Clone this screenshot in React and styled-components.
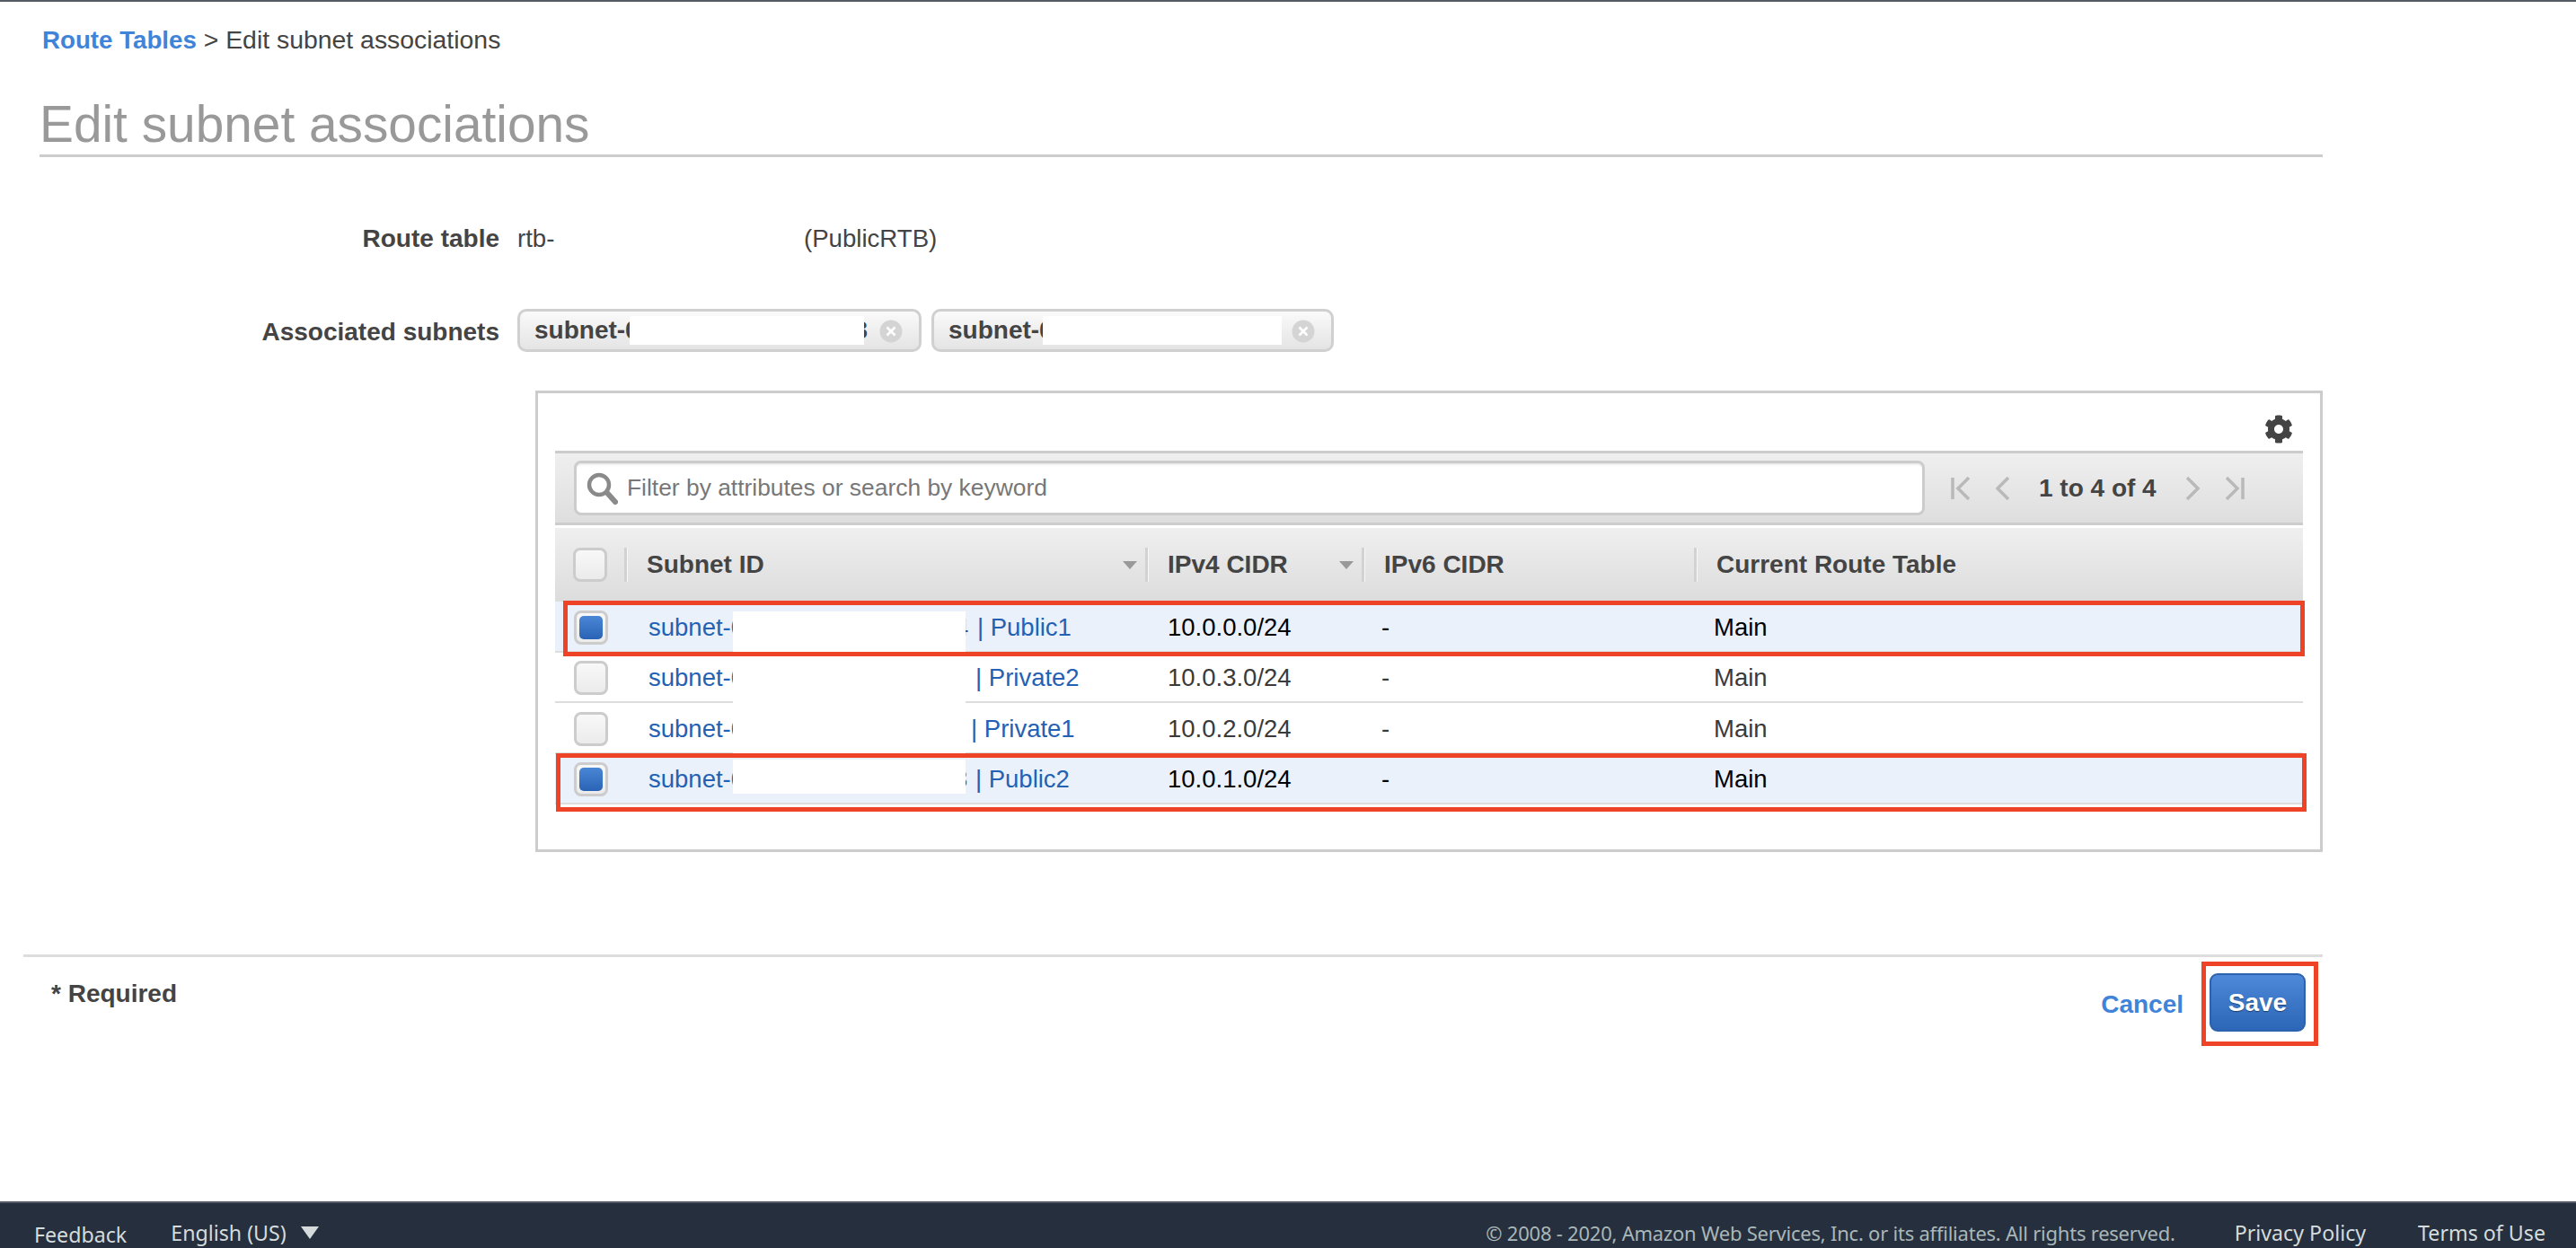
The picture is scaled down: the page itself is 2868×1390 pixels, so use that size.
import React from 'react';
import styled, { createGlobalStyle } from 'styled-components';
import { FaCog } from 'react-icons/fa';

const Global = createGlobalStyle`
  html, body { margin: 0; padding: 0; background: #fff; }
  body { font-family: "Liberation Sans", Arial, sans-serif; color: #444; }
`;

const RED = '#ee4327';

const Page = styled.div`
  width: 2868px;
  height: 1390px;
  display: flex;
  flex-direction: column;
  border-top: 2px solid #545b64;
  box-sizing: border-box;
  overflow: hidden;
`;
const Main = styled.main`
  flex: 1;
  width: 2560px;
  margin-left: 26px;
  display: flex;
  flex-direction: column;
`;
const Breadcrumb = styled.nav`
  margin: 26px 0 0 21px;
  height: 32px;
  line-height: 32px;
  font-size: 28.4px;
  color: #444;
`;
const Crumb = styled.a`
  color: #3f84d8;
  font-weight: 700;
  font-size: 27.7px;
`;
const Title = styled.h1`
  margin: 52px 0 0 18px;
  height: 60px;
  border-bottom: 3px solid #ccc;
  font-size: 56.8px;
  line-height: 54px;
  font-weight: 400;
  color: #999;
`;
const FormRow = styled.div`
  display: grid;
  grid-template-columns: 530px 1fr;
  column-gap: 20px;
  align-items: center;
  height: ${p => p.$h}px;
  margin-top: ${p => p.$mt}px;
  font-size: 28px;
`;
const Label = styled.label`
  text-align: right;
  font-weight: 700;
  color: #444;
  padding-top: ${p => p.$pt || 0}px;
`;
const RouteValue = styled.div`
  display: flex;
  font-size: 27.6px;
`;
const RtbId = styled.span`
  width: 319px;
`;
const Chips = styled.div`
  display: flex;
  gap: 11px;
`;
const Chip = styled.div`
  position: relative;
  box-sizing: border-box;
  width: ${p => p.$w}px;
  height: 48px;
  padding: 0 0 0 16px;
  display: flex;
  align-items: center;
  border: 3px solid #d0d0d0;
  border-radius: 10px;
  background: linear-gradient(#fafafa, #e4e4e4);
  font-weight: 700;
  color: #444;
`;
const ChipMask = styled.span`
  position: absolute;
  left: ${p => p.$left}px;
  width: ${p => p.$w}px;
  top: 5px;
  height: 32px;
  background: #fff;
`;
const ChipTail = styled.span`
  position: absolute;
  right: 57px;
  top: 5px;
  line-height: 32px;
`;
const ChipClose = styled.svg`
  position: absolute;
  right: 18px;
  top: 9px;
  width: 26px;
  height: 26px;
`;
const Panel = styled.section`
  box-sizing: border-box;
  margin: 43px 0 0 570px;
  width: 1990px;
  height: 514px;
  border: 3px solid #ccc;
  padding: 0 19px;
`;
const GearRow = styled.div`
  height: 64px;
  display: flex;
  align-items: flex-end;
  justify-content: flex-end;
  padding: 0 11px 8px 0;
  box-sizing: border-box;
  color: #444;
`;
const FilterBar = styled.div`
  box-sizing: border-box;
  height: 83px;
  border-top: 3px solid #ccc;
  border-bottom: 3px solid #ccc;
  background: linear-gradient(#efefef, #dedede);
  display: flex;
  align-items: center;
  padding-left: 21px;
`;
const SearchBox = styled.div`
  box-sizing: border-box;
  flex: 0 0 1504px;
  height: 61px;
  display: flex;
  align-items: center;
  gap: 10px;
  padding-left: 10px;
  background: #fff;
  border: 3px solid #ccc;
  border-radius: 8px;
  box-shadow: inset 0 3px 3px -2px #ddd;
  font-size: 26.4px;
  color: #777;
  white-space: nowrap;
`;
const Pager = styled.div`
  display: flex;
  align-items: center;
  gap: 29px;
  margin-left: 29px;
`;
const PagerText = styled.span`
  margin: 0 4px;
  font-size: 28px;
  font-weight: 700;
  color: #444;
  white-space: nowrap;
`;
const HeaderRow = styled.div`
  margin-top: 3px;
  height: 82px;
  display: grid;
  grid-template-columns: 77px 580px 241px 370px 1fr;
  align-items: center;
  background: linear-gradient(#efefef, #dcdcdc);
  font-size: 28px;
  font-weight: 700;
  color: #444;
`;
const HeadCell = styled.div`
  position: relative;
  box-sizing: border-box;
  height: 38px;
  display: flex;
  align-items: center;
  padding-left: 22px;
  border-left: 3px solid #d2d2d2;
  box-shadow: inset 1px 0 0 #f8f8f8;
`;
const CheckCell = styled.div`
  display: flex;
  align-items: center;
  padding-left: ${p => p.$pl}px;
`;
const Caret = styled.span`
  position: absolute;
  right: 9px;
  top: 15px;
  border-left: 8px solid transparent;
  border-right: 8px solid transparent;
  border-top: 9px solid #999;
`;
const Check = styled.span`
  box-sizing: border-box;
  width: 38px;
  height: 38px;
  border: 3px solid #ccc;
  border-radius: 8px;
  background: linear-gradient(#f8f8f8, #ebebeb);
  display: flex;
  align-items: center;
  justify-content: center;
  &::after {
    content: '';
    display: ${p => (p.$checked ? 'block' : 'none')};
    width: 26px;
    height: 26px;
    border-radius: 5px;
    background: linear-gradient(#4a86d6, #2a63b5);
  }
`;
const Body = styled.div`
  position: relative;
`;
const Row = styled.div`
  box-sizing: border-box;
  height: 56.5px;
  padding-top: 3px;
  display: grid;
  grid-template-columns: 79px 580px 241px 370px 1fr;
  align-items: center;
  border-bottom: 2px solid #ddd;
  background: ${p => (p.$selected ? '#eaf1fb' : '#fff')};
  color: ${p => (p.$selected ? '#000' : '#3a3a3a')};
  font-size: 27.5px;
`;
const Cell = styled.div`
  padding-left: ${p => p.$pl ?? 23}px;
  white-space: nowrap;
`;
const SubnetLink = styled.a`
  display: flex;
  padding-left: 25px;
  color: #2561b3;
  white-space: nowrap;
`;
const Prefix = styled.span`
  width: 94px;
`;
const Tail = styled.span`
  margin-left: ${p => p.$at}px;
`;
const Remnant = styled.span`
  margin-right: ${p => p.$gap}px;
`;
const Redaction = styled.div`
  position: absolute;
  left: 198px;
  width: 259px;
  top: ${p => p.$top}px;
  height: ${p => p.$h}px;
  background: #fff;
`;
const Highlight = styled.div`
  position: absolute;
  box-sizing: border-box;
  left: ${p => p.$left}px;
  top: ${p => p.$top}px;
  width: ${p => p.$w}px;
  height: ${p => p.$h}px;
  border: 5px solid ${RED};
`;
const Actions = styled.div`
  margin-top: 114px;
  border-top: 3px solid #ddd;
  height: 105px;
  display: flex;
  align-items: flex-start;
  justify-content: space-between;
  padding: 18px 19px 0 31px;
  font-size: 28px;
`;
const Required = styled.strong`
  padding-top: 4px;
  line-height: 38px;
  color: #444;
`;
const ActionGroup = styled.div`
  display: flex;
  align-items: center;
  gap: 29px;
`;
const Cancel = styled.a`
  margin-top: 5px;
  color: #3f84d8;
  font-weight: 700;
`;
const SaveWrap = styled.div`
  position: relative;
`;
const Save = styled.button`
  box-sizing: border-box;
  display: block;
  width: 107px;
  height: 65px;
  border: 2px solid #2c62ae;
  border-radius: 9px;
  background: linear-gradient(#4d89d8, #2c66b7);
  color: #fff;
  font: 700 28px "Liberation Sans", Arial, sans-serif;
  text-shadow: 0 1px 1px rgba(0, 0, 0, 0.45);
  padding: 0;
`;
const Footer = styled.footer`
  box-sizing: border-box;
  height: 52px;
  flex: 0 0 52px;
  border-top: 2px solid #545b64;
  background: #252f3e;
  color: #d5dbdb;
  font: 23.2px "Noto Sans", "Open Sans", sans-serif;
  display: flex;
  align-items: center;
  padding: 16px 34px 0 38px;
  white-space: nowrap;
`;
const FootLeft = styled.div`
  display: flex;
  align-items: center;
  gap: 49px;
`;
const Feedback = styled.span`
  padding-top: 3px;
`;
const Lang = styled.span`
  display: flex;
  align-items: center;
  gap: 16px;
  &::after {
    content: '';
    border-left: 10px solid transparent;
    border-right: 10px solid transparent;
    border-top: 14px solid #d5dbdb;
  }
`;
const FootRight = styled.div`
  margin-left: auto;
  display: flex;
  align-items: center;
  gap: 58px;
`;
const Copyright = styled.span`
  margin-right: 8px;
  color: #aab7b8;
  font-size: 22px;
  letter-spacing: -0.23px;
`;

const PagerIcon = ({ kind }) => {
  const wide = kind === 'first' || kind === 'last';
  const w = wide ? 21 : 15;
  const paths = {
    first: <><path d="M2 1v24" /><path d="M20 1L8 13l12 12" /></>,
    prev: <path d="M14 1L2 13l12 12" />,
    next: <path d="M1 1l12 12L1 25" />,
    last: <><path d="M19 1v24" /><path d="M1 1l12 12L1 25" /></>,
  };
  return (
    <svg width={w} height="26" viewBox={`0 0 ${w} 26`} fill="none" stroke="#b9b9b9" strokeWidth="3.5">
      {paths[kind]}
    </svg>
  );
};

const SearchIcon = () => (
  <svg width="36" height="40" viewBox="0 0 36 40" fill="none">
    <circle cx="15" cy="16" r="11" stroke="#8a8a8a" strokeWidth="4.5" />
    <path d="M24 25l9 10" stroke="#8a8a8a" strokeWidth="6" strokeLinecap="round" />
  </svg>
);

const CloseIcon = () => (
  <ChipClose viewBox="0 0 26 26">
    <circle cx="13" cy="13" r="12.5" fill="#d4d4d4" />
    <path d="M8.5 8.5l9 9M17.5 8.5l-9 9" stroke="#fff" strokeWidth="2.6" />
  </ChipClose>
);

const rows = [
  { digit: '4', gap: 2, tail: '| Public1', at: 247, cidr: '10.0.0.0/24', selected: true },
  { tail: '| Private2', at: 270, cidr: '10.0.3.0/24' },
  { tail: '| Private1', at: 265, cidr: '10.0.2.0/24' },
  { digit: '3', gap: 1, tail: '| Public2', at: 246, cidr: '10.0.1.0/24', selected: true },
];

export default function App() {
  return (
    <Page>
      <Global />
      <Main>
        <Breadcrumb>
          <Crumb>Route Tables</Crumb> &gt; Edit subnet associations
        </Breadcrumb>
        <Title>Edit subnet associations</Title>
        <FormRow $mt={73} $h={36}>
          <Label>Route table</Label>
          <RouteValue>
            <RtbId>rtb-</RtbId>
            <span>(PublicRTB)</span>
          </RouteValue>
        </FormRow>
        <FormRow $mt={60} $h={48}>
          <Label $pt={3}>Associated subnets</Label>
          <Chips>
            <Chip $w={450}>
              subnet-0
              <ChipTail>3</ChipTail>
              <ChipMask $left={122} $w={261} />
              <CloseIcon />
            </Chip>
            <Chip $w={448}>
              subnet-0
              <ChipMask $left={121} $w={266} />
              <CloseIcon />
            </Chip>
          </Chips>
        </FormRow>
        <Panel>
          <GearRow>
            <FaCog size={32} />
          </GearRow>
          <FilterBar>
            <SearchBox>
              <SearchIcon />
              Filter by attributes or search by keyword
            </SearchBox>
            <Pager>
              <PagerIcon kind="first" />
              <PagerIcon kind="prev" />
              <PagerText>1 to 4 of 4</PagerText>
              <PagerIcon kind="next" />
              <PagerIcon kind="last" />
            </Pager>
          </FilterBar>
          <HeaderRow>
            <CheckCell $pl={20}><Check /></CheckCell>
            <HeadCell>Subnet ID<Caret /></HeadCell>
            <HeadCell>IPv4 CIDR<Caret /></HeadCell>
            <HeadCell>IPv6 CIDR</HeadCell>
            <HeadCell>Current Route Table</HeadCell>
          </HeaderRow>
          <Body>
            {rows.map(r => (
              <Row key={r.cidr} $selected={r.selected}>
                <CheckCell $pl={21}><Check $checked={r.selected} /></CheckCell>
                <SubnetLink>
                  <Prefix>subnet-0</Prefix>
                  <Tail $at={r.at}>
                    {r.digit && <Remnant $gap={r.gap}>{r.digit}</Remnant>} {r.tail}
                  </Tail>
                </SubnetLink>
                <Cell>{r.cidr}</Cell>
                <Cell $pl={20}>-</Cell>
                <Cell $pl={20}>Main</Cell>
              </Row>
            ))}
            <Redaction $top={11} $h={46} />
            <Redaction $top={58} $h={112} />
            <Redaction $top={176} $h={38} />
            <Highlight $left={9} $top={-1} $w={1939} $h={62} />
            <Highlight $left={1} $top={169} $w={1949} $h={65} />
          </Body>
        </Panel>
        <Actions>
          <Required>* Required</Required>
          <ActionGroup>
            <Cancel>Cancel</Cancel>
            <SaveWrap>
              <Save>Save</Save>
              <Highlight $left={-9} $top={-13} $w={130} $h={94} />
            </SaveWrap>
          </ActionGroup>
        </Actions>
      </Main>
      <Footer>
        <FootLeft>
          <Feedback>Feedback</Feedback>
          <Lang>English (US)</Lang>
        </FootLeft>
        <FootRight>
          <Copyright>© 2008 - 2020, Amazon Web Services, Inc. or its affiliates. All rights reserved.</Copyright>
          <span>Privacy Policy</span>
          <span>Terms of Use</span>
        </FootRight>
      </Footer>
    </Page>
  );
}
